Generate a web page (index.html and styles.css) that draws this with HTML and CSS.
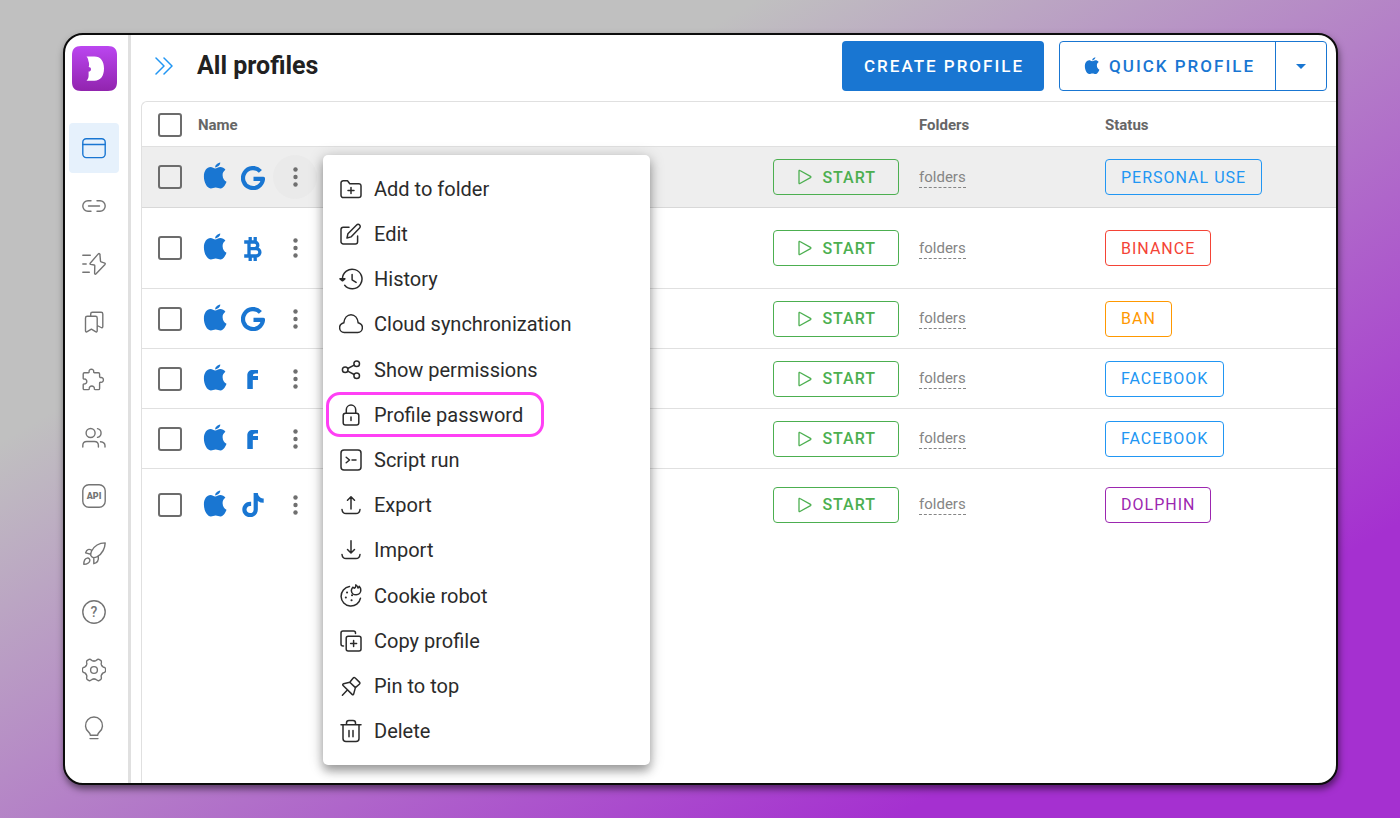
FILE: index.html
```html
<!DOCTYPE html>
<html lang="en">
<head>
  <meta charset="UTF-8" />
  <title>All profiles</title>
  <meta name="viewport" content="width=device-width, initial-scale=1.0" />
  <link rel="stylesheet" href="styles.css">
</head>
<body>

  <!-- Icons -->
  <svg class="sprite" aria-hidden="true">
    <symbol id="i-apple" viewBox="0 0 24 28"><path fill="currentColor" d="M12.3 6.6c1.4-.2 2.8-1.5 5-1.5 2 0 3.9 1 5.1 2.7-2 1.4-2.9 3.2-2.8 5.5.1 3.2 1.6 5.3 3.9 6.4-1.1 3-3.2 6.6-5.8 6.7-1.8.1-3-.9-5-.9s-3.4 1-5 .9C4 26.2.9 20.5.9 14.5.9 8.8 4 5.200 7.500 5.100c1.900 0 3.300 1.200 4.800 1.500z"/><path fill="currentColor" d="M12.200 5.400c-.2-2 2-4.400 5.100-4.900.1 2.300-2.300 4.700-5.100 4.900z"/></symbol>
    <symbol id="i-google" viewBox="0 0 24 24"><path stroke="currentColor" stroke-width="4.200" fill="none" d="M19.400 5.300A10 10 0 1 0 22 12.800H12.500"/></symbol>
    <symbol id="i-bitcoin" viewBox="0 0 24 24"><path stroke="currentColor" stroke-width="3.300" fill="none" d="M3.200 5h10.300a3.300 3.300 0 0 1 0 6.600H8m5.500 0h1.700a3.600 3.600 0 0 1 0 7.400H3.200M8 5v14M9.200 0v4m5-4v4m-5 16v4m5-4v4"/></symbol>
    <symbol id="i-facebook" viewBox="0 0 24 24"><path fill="currentColor" d="M6.300 22V8.500C6.300 5 8.300 3 11.800 3H17v3.600h-2.600c-1.600 0-2.400.7-2.400 2.400h5v3.900h-5.200V22z"/></symbol>
    <symbol id="i-tiktok" viewBox="3.200 3.200 17.600 17.600"><path fill="currentColor" d="M16.600 5.820A4.278 4.278 0 0 1 15.540 3h-3.090v12.400a2.592 2.592 0 0 1-2.590 2.500c-1.420 0-2.600-1.160-2.600-2.600 0-1.720 1.660-3.010 3.370-2.480V9.660c-3.450-.46-6.470 2.220-6.470 5.640 0 3.330 2.760 5.700 5.690 5.700 3.140 0 5.690-2.550 5.690-5.700V9.010a7.350 7.350 0 0 0 4.300 1.380V7.300s-1.880.09-3.240-1.480z"/></symbol>
    <symbol id="i-dots" viewBox="0 0 24 24"><g fill="currentColor"><circle cx="12.500" cy="4.500" r="2.200"/><circle cx="12.500" cy="12" r="2.200"/><circle cx="12.500" cy="19.500" r="2.200"/></g></symbol>
    <symbol id="i-play" viewBox="0 0 14 16"><path d="M1 2v12c0 .6.4.8.9.5l10.600-5.900c.5-.3.5-.9 0-1.200L1.900 1.500C1.400 1.200 1 1.400 1 2z"/></symbol>

    <symbol id="i-window" viewBox="0 0 24 24"><rect x=".8" y="2.800" width="22.400" height="18.800" rx="3.500"/><path d="M.8 8.500h22.400"/></symbol>
    <symbol id="i-link" viewBox="0 0 24 24"><path d="M9 6.800H6a5.200 5.200 0 0 0 0 10.400h3M15 6.800h3a5.200 5.200 0 0 1 0 10.400h-3M6.500 12h11"/></symbol>
    <symbol id="i-bolt" viewBox="0 0 24 24"><path d="M.8 3.200h7.500M.8 12h3.400M.8 20.300h6.500M16.300 1.900L8.200 11.200c-.4.5-.2 1 .4 1.200l3.600.6c.4.100.6.3.6.7l-.2 7.500c0 1 .8 1.300 1.500.6l8.900-9.400c.4-.5.3-.9-.2-1.200l-3.700-1.300c-.4-.1-.6-.4-.6-.8l-.6-6.700c0-.9-1-1.100-1.600-.5z"/></symbol>
    <symbol id="i-bookmarks" viewBox="0 0 24 24"><path d="M5.200 6.300h8.300c1 0 1.700.7 1.700 1.700v12.800c0 1.100-.8 1.500-1.700.9l-4.100-2.500-4.200 2.500c-.9.6-1.700.2-1.700-.9V8c0-1 .7-1.700 1.700-1.700zM8.700 6.300V4c0-1 .7-1.700 1.700-1.700h8.700c1 0 1.700.7 1.700 1.700v12.500c0 1-.8 1.500-1.700 1l-3.900-2"/></symbol>
    <symbol id="i-puzzle" viewBox="0 0 24 24"><path d="M2.500 4.800h3.700c.8 0 1-.6.9-1.200C6.900 2.200 8 1.200 9.400 1.200s2.500 1 2.300 2.400c-.1.6.1 1.200.9 1.200h3.800c.8 0 1.200.5 1.200 1.200v2.600c0 .8.6 1 1.200.9 1.400-.2 2.600.9 2.600 2.400s-1.200 2.600-2.600 2.400c-.6-.1-1.200.1-1.200.9v5.200c0 .8-.4 1.200-1.200 1.200h-3.200c-.8 0-1-.6-.9-1.200.2-1.400-1-2.400-2.500-2.400s-2.700 1-2.500 2.400c.1.6-.1 1.200-.9 1.200h-4c-.8 0-1.200-.4-1.200-1.200v-3.600c0-.8.6-1 1.200-.9 1.400.2 2.400-.9 2.400-2.400s-1-2.600-2.400-2.400c-.6.1-1.200-.1-1.200-.9V6c0-.8.5-1.200 1.300-1.200z"/></symbol>
    <symbol id="i-users" viewBox="0 0 24 24"><circle cx="8.600" cy="7" r="4.500"/><path d="M.8 21v-1.500c0-2.600 1.600-4 4-4h7.600c2.400 0 4 1.400 4 4V21M15.500 2.600a4.500 4.500 0 0 1 0 8.800M18.500 15.700c2.900.3 4.500 1.600 4.500 4V21"/></symbol>
    <symbol id="i-rocket" viewBox="0 0 24 24"><path d="M23.200.9C17 1 12.500 3.500 9.600 9c-.6 1.300-1 2.700-.9 4.300.5 1.300 1.300 2 2.800 2.400 1.500 0 2.600-.4 3.800-1C20.500 11.500 22.900 7 23.200.9zM9.900 8.500C7 6.500 4.600 7.300 3.600 10.900l5.100 1.300M11.800 15.700v6c3.400-1 5.200-3 4.500-7.400M1.800 22.300c0-3.200.8-5.700 3.400-6.200 1.700-.3 3 1 2.600 2.700-.5 2.200-3 3.300-6 3.500z"/></symbol>
    <symbol id="i-gear" viewBox="0 0 24 24">
      <path id="tooth" d="M19.800 7.500l.2.400q.6 1 1.700 1.300 1.900.6 1.900 1.800v2q0 1.200-1.900 1.800-1.100.3-1.700 1.300l-.2.400"/>
      <use href="#tooth" transform="rotate(60 12 12)"/>
      <use href="#tooth" transform="rotate(120 12 12)"/>
      <use href="#tooth" transform="rotate(180 12 12)"/>
      <use href="#tooth" transform="rotate(240 12 12)"/>
      <use href="#tooth" transform="rotate(300 12 12)"/>
      <circle cx="12" cy="12" r="3.400"/>
    </symbol>
    <symbol id="i-bulb" viewBox="0 0 24 24"><path d="M8.300 19.300h7.400c0-1.600.4-2.200 1.600-3.200a8.500 8.500 0 1 0-10.600 0c1.200 1 1.600 1.600 1.600 3.200zM8 22.600h8"/></symbol>

    <symbol id="i-folder" viewBox="0 0 24 24"><path d="M2 6a2.300 2.300 0 0 1 2.300-2.300h4.200l2.300 3h9A2.200 2.200 0 0 1 22 8.900v9.400a2.300 2.300 0 0 1-2.300 2.300H4.300A2.300 2.300 0 0 1 2 18.300zM12 10.500v6M9 13.500h6"/></symbol>
    <symbol id="i-edit" viewBox="0 0 24 24"><path d="M10 5.300H4.300A2.300 2.300 0 0 0 2 7.600v12.100A2.300 2.300 0 0 0 4.300 22h12a2.300 2.300 0 0 0 2.300-2.300V14M8 16l.9-4.200L17.600 3a2.100 2.100 0 0 1 3 0 2.100 2.100 0 0 1 0 3L12 14.900z"/></symbol>
    <symbol id="i-history" viewBox="0 0 24 24"><path d="M3.400 12a9.800 9.800 0 1 1 2.300 6.300M13.100 7.500v5.300l4 2.600M1 11.800h4.900l-2.400 2z"/></symbol>
    <symbol id="i-cloud" viewBox="0 0 24 24"><path d="M5.200 20.500h13.600a4.700 4.700 0 0 0 4.600-4.700c0-2.600-1.800-4.300-4.200-5-.6-4.500-3.400-8-7.200-8s-6.600 3.500-7.200 8c-2.400.7-4.200 2.400-4.200 5a4.700 4.700 0 0 0 4.600 4.700z"/></symbol>
    <symbol id="i-share" viewBox="0 0 24 24"><circle cx="6.200" cy="11.800" r="2.800"/><circle cx="17.700" cy="5.800" r="2.800"/><circle cx="17.700" cy="17.800" r="2.800"/><path d="M8.700 10.500l6.500-3.400M8.700 13.100l6.500 3.400"/></symbol>
    <symbol id="i-lock" viewBox="0 0 24 24"><rect x="4.200" y="10.300" width="15.600" height="11.700" rx="2.300"/><path d="M7.300 10.300V6.800a4.700 4.700 0 0 1 9.400 0v3.500M12 14v3.500"/></symbol>
    <symbol id="i-script" viewBox="0 0 24 24"><rect x="2" y="2" width="20" height="20" rx="3"/><path d="M7.200 9.200l3.300 2.800-3.300 2.800M13 12h4"/></symbol>
    <symbol id="i-export" viewBox="0 0 24 24"><path d="M12 16V4M8.500 7.200L12 3.700l3.500 3.500M3 16.500c.3 2.700 1.500 4 4 4h10c2.500 0 3.700-1.300 4-4"/></symbol>
    <symbol id="i-import" viewBox="0 0 24 24"><path d="M12 2.700v12M8.500 11.500L12 15l3.500-3.500M3 16.500c.3 2.700 1.500 4 4 4h10c2.500 0 3.700-1.300 4-4"/></symbol>
    <symbol id="i-cookie" viewBox="0 0 24 24"><path d="M10.500 2.600a9.800 9.800 0 1 0 11 11.600"/><path stroke-width="2" d="M8 8.500h.1M13 11.300h.1M6.800 13.500h.1M12.500 16.300h.1"/><path d="M16.800.8c.2 2-.3 2.900-1.700 3.500-.2-.8-.6-1-1.300-1-1 1.200-1.600 2.100-1.400 3.700.4 2.500 2.300 3.800 4.700 3.800 2.700 0 4.700-1.900 4.700-4.500 0-1.800-.6-3-1.600-4-.2.900-.6 1.400-1.300 1.700 0-1.500-.8-2.500-2.100-3.200z"/></symbol>
    <symbol id="i-copy" viewBox="0 0 24 24"><rect x="7.200" y="7.200" width="14.800" height="14.800" rx="2"/><path d="M16.500 4.500V4a2 2 0 0 0-2-2H4a2 2 0 0 0-2 2v11a2 2 0 0 0 2 2h.5M14.600 11.600v6M11.600 14.600h6"/></symbol>
    <symbol id="i-pin" viewBox="0 0 24 24"><path d="M10.800 8.300l3.200-4.100c.7-.8 1.500-.8 2.200-.2l4.200 4.100c.7.700.7 1.500-.1 2.200l-3.900 3.300-1.700 6.300c-.2.900-1 1.100-1.600.5l-9-8.900c-.7-.7-.4-1.500.5-1.700zM10.800 8.300l5.600 5.300M8.600 15.800l-5.200 5.400"/></symbol>
    <symbol id="i-trash" viewBox="0 0 24 24"><path d="M2 5.800h20M7.500 5.500V4a2.500 2.500 0 0 1 2.500-2.500h4A2.500 2.500 0 0 1 16.500 4v1.500M4 6v13.500A3 3 0 0 0 7 22.500h10a3 3 0 0 0 3-3V6M10 11.500v6.300M14 11.500v6.300"/></symbol>
  </svg>

  <div class="window">

    <nav class="sidebar" aria-label="Main">
      <a class="logo" href="#" aria-label="Home">
        <svg viewBox="0 0 45 45">
          <defs>
            <linearGradient id="logoFill" x1="0" y1="0" x2="0" y2="1">
              <stop offset="0" stop-color="#bb46f0"/>
              <stop offset="1" stop-color="#9124ae"/>
            </linearGradient>
          </defs>
          <path fill="url(#logoFill)" d="M0 9C0 3 3 0 9 0h27c6 0 9 3 9 9v27c0 6-3 9-9 9H9c-6 0-9-3-9-9z"/>
          <path fill="#fff" d="M14.500 10.500h8c6 0 9.500 4.500 9.500 12s-3.500 12.200-9.500 12.200h-8c1.300-1.200 2.100-2.800 2.100-5.200v-4c1 .2 2.400-.9 2.400-2.300 0-1.500-1.100-2.300-2.300-2.300.6-2 .5-4-.3-6-.2-1.700-.7-3-1.900-4.400z"/>
        </svg>
      </a>
      <a class="nav-item active" href="#" aria-label="Profiles"><svg><use href="#i-window"/></svg></a>
      <a class="nav-item" href="#" aria-label="Proxies"><svg><use href="#i-link"/></svg></a>
      <a class="nav-item" href="#" aria-label="Automation"><svg><use href="#i-bolt"/></svg></a>
      <a class="nav-item" href="#" aria-label="Bookmarks"><svg><use href="#i-bookmarks"/></svg></a>
      <a class="nav-item" href="#" aria-label="Extensions"><svg><use href="#i-puzzle"/></svg></a>
      <a class="nav-item" href="#" aria-label="Team"><svg><use href="#i-users"/></svg></a>
      <a class="nav-item" href="#" aria-label="API">
        <svg viewBox="0 0 24 24"><rect x=".8" y=".8" width="22.400" height="22.400" rx="6"/><text x="12" y="15" class="glyph api">API</text></svg>
      </a>
      <a class="nav-item" href="#" aria-label="Updates"><svg><use href="#i-rocket"/></svg></a>
      <a class="nav-item" href="#" aria-label="Help">
        <svg viewBox="0 0 24 24"><circle cx="12" cy="12" r="11.200"/><text x="12" y="17" class="glyph mark">?</text></svg>
      </a>
      <a class="nav-item" href="#" aria-label="Settings"><svg><use href="#i-gear"/></svg></a>
      <a class="nav-item" href="#" aria-label="Ideas"><svg><use href="#i-bulb"/></svg></a>
    </nav>

    <main class="main">
      <header class="topbar">
        <button class="expand" aria-label="Expand menu">
          <svg viewBox="0 0 18 18"><path d="M1 1l8 8-8 8M9 1l8 8-8 8"/></svg>
        </button>
        <h1>All profiles</h1>
        <button class="btn btn-primary">Create profile</button>
        <div class="btn-group">
          <button class="btn"><svg class="apple"><use href="#i-apple"/></svg>Quick profile</button>
          <button class="btn btn-caret" aria-label="More options"><span class="caret"></span></button>
        </div>
      </header>

      <div class="table-wrap">
        <table>
          <thead>
            <tr>
              <th class="col-check"><input type="checkbox" aria-label="Select all"></th>
              <th>Name</th>
              <th class="col-start"></th>
              <th class="col-folders">Folders</th>
              <th class="col-status">Status</th>
            </tr>
          </thead>
          <tbody>
            <tr class="selected">
              <td class="col-check"><input type="checkbox" aria-label="Select profile 1"></td>
              <td>
                <div class="name">
                  <svg class="apple"><use href="#i-apple"/></svg>
                  <svg class="brand"><use href="#i-google"/></svg>
                  <div class="actions">
                    <button class="more" aria-label="Profile menu" aria-expanded="true"><svg><use href="#i-dots"/></svg></button>
                    <div class="menu" role="menu">
                      <button class="menu-item" role="menuitem"><svg><use href="#i-folder"/></svg>Add to folder</button>
                      <button class="menu-item" role="menuitem"><svg><use href="#i-edit"/></svg>Edit</button>
                      <button class="menu-item" role="menuitem"><svg><use href="#i-history"/></svg>History</button>
                      <button class="menu-item" role="menuitem"><svg><use href="#i-cloud"/></svg>Cloud synchronization</button>
                      <button class="menu-item" role="menuitem"><svg><use href="#i-share"/></svg>Show permissions</button>
                      <button class="menu-item highlight" role="menuitem"><svg><use href="#i-lock"/></svg>Profile password</button>
                      <button class="menu-item" role="menuitem"><svg><use href="#i-script"/></svg>Script run</button>
                      <button class="menu-item" role="menuitem"><svg><use href="#i-export"/></svg>Export</button>
                      <button class="menu-item" role="menuitem"><svg><use href="#i-import"/></svg>Import</button>
                      <button class="menu-item" role="menuitem"><svg><use href="#i-cookie"/></svg>Cookie robot</button>
                      <button class="menu-item" role="menuitem"><svg><use href="#i-copy"/></svg>Copy profile</button>
                      <button class="menu-item" role="menuitem"><svg><use href="#i-pin"/></svg>Pin to top</button>
                      <button class="menu-item" role="menuitem"><svg><use href="#i-trash"/></svg>Delete</button>
                    </div>
                  </div>
                </div>
              </td>
              <td><button class="start"><svg><use href="#i-play"/></svg>Start</button></td>
              <td><a class="folders" href="#">folders</a></td>
              <td><button class="status blue">Personal use</button></td>
            </tr>
            <tr class="tall">
              <td class="col-check"><input type="checkbox" aria-label="Select profile 2"></td>
              <td>
                <div class="name">
                  <svg class="apple"><use href="#i-apple"/></svg>
                  <svg class="brand"><use href="#i-bitcoin"/></svg>
                  <button class="more" aria-label="Profile menu"><svg><use href="#i-dots"/></svg></button>
                </div>
              </td>
              <td><button class="start"><svg><use href="#i-play"/></svg>Start</button></td>
              <td><a class="folders" href="#">folders</a></td>
              <td><button class="status red">Binance</button></td>
            </tr>
            <tr>
              <td class="col-check"><input type="checkbox" aria-label="Select profile 3"></td>
              <td>
                <div class="name">
                  <svg class="apple"><use href="#i-apple"/></svg>
                  <svg class="brand"><use href="#i-google"/></svg>
                  <button class="more" aria-label="Profile menu"><svg><use href="#i-dots"/></svg></button>
                </div>
              </td>
              <td><button class="start"><svg><use href="#i-play"/></svg>Start</button></td>
              <td><a class="folders" href="#">folders</a></td>
              <td><button class="status orange">Ban</button></td>
            </tr>
            <tr>
              <td class="col-check"><input type="checkbox" aria-label="Select profile 4"></td>
              <td>
                <div class="name">
                  <svg class="apple"><use href="#i-apple"/></svg>
                  <svg class="brand"><use href="#i-facebook"/></svg>
                  <button class="more" aria-label="Profile menu"><svg><use href="#i-dots"/></svg></button>
                </div>
              </td>
              <td><button class="start"><svg><use href="#i-play"/></svg>Start</button></td>
              <td><a class="folders" href="#">folders</a></td>
              <td><button class="status blue">Facebook</button></td>
            </tr>
            <tr>
              <td class="col-check"><input type="checkbox" aria-label="Select profile 5"></td>
              <td>
                <div class="name">
                  <svg class="apple"><use href="#i-apple"/></svg>
                  <svg class="brand"><use href="#i-facebook"/></svg>
                  <button class="more" aria-label="Profile menu"><svg><use href="#i-dots"/></svg></button>
                </div>
              </td>
              <td><button class="start"><svg><use href="#i-play"/></svg>Start</button></td>
              <td><a class="folders" href="#">folders</a></td>
              <td><button class="status blue">Facebook</button></td>
            </tr>
            <tr class="last">
              <td class="col-check"><input type="checkbox" aria-label="Select profile 6"></td>
              <td>
                <div class="name">
                  <svg class="apple"><use href="#i-apple"/></svg>
                  <svg class="brand"><use href="#i-tiktok"/></svg>
                  <button class="more" aria-label="Profile menu"><svg><use href="#i-dots"/></svg></button>
                </div>
              </td>
              <td><button class="start"><svg><use href="#i-play"/></svg>Start</button></td>
              <td><a class="folders" href="#">folders</a></td>
              <td><button class="status purple">Dolphin</button></td>
            </tr>
          </tbody>
        </table>
      </div>
    </main>
  </div>

</body>
</html>
```
FILE: styles.css
```css
:root {
  --blue: #1976d2;
  --light-blue: #2196f3;
  --green: #4caf50;
  --line: #e0e0e0;
  --text: #212121;
}

* {
  box-sizing: border-box;
}

body {
  margin: 0;
  min-height: 100vh;
  padding: 33px 62px 33px 63px;
  font-family: Roboto, sans-serif;
  color: var(--text);
  background: linear-gradient(to bottom right, #c0c0c0 27%, #a530d0 82%);
}

button {
  font-family: inherit;
  background: none;
  border: none;
  padding: 0;
  cursor: pointer;
}

svg {
  display: block;
  flex: none;
  fill: none;
  stroke-linecap: round;
  stroke-linejoin: round;
}

.sprite {
  position: absolute;
  width: 0;
  height: 0;
}

.window {
  display: flex;
  min-height: calc(100vh - 66px);
  background: #fff;
  border: 2px solid #0c0c0c;
  border-radius: 20px;
  box-shadow: 1px 4px 7px rgba(0, 0, 0, 0.5);
  overflow: hidden;
}

/* Sidebar */
.sidebar {
  display: flex;
  flex-direction: column;
  align-items: center;
  gap: 8px;
  padding: 11px 9px 20px 4px;
  border-right: 3px solid var(--line);
}

.logo {
  margin-bottom: 24px;
}

.logo svg {
  width: 45px;
  height: 45px;
}

.nav-item {
  display: grid;
  place-items: center;
  width: 50px;
  height: 50px;
  border-radius: 4px;
  color: #747474;
}

.nav-item svg {
  width: 24px;
  height: 24px;
  stroke: currentColor;
  stroke-width: 1.4;
  overflow: visible;
}

.nav-item.active {
  color: var(--blue);
  background: #e6f1fc;
}

.glyph {
  fill: currentColor;
  stroke: none;
  text-anchor: middle;
  font-family: Roboto, sans-serif;
}

.api {
  font-size: 9px;
  font-weight: 900;
}

.mark {
  font-size: 14px;
  font-weight: 500;
}

/* Top bar */
.main {
  flex: 1;
  min-width: 0;
  display: flex;
  flex-direction: column;
  padding-left: 10px;
}

.topbar {
  display: flex;
  align-items: center;
  padding: 6px 9px 10px 14px;
}

.expand svg {
  width: 18px;
  height: 18px;
  stroke: var(--light-blue);
  stroke-width: 1.5;
}

h1 {
  flex: 1;
  margin: 0 0 0 24px;
  font-size: 25px;
  font-weight: 700;
  line-height: 30px;
}

.btn {
  display: flex;
  align-items: center;
  height: 50px;
  padding: 0 20px 0 22px;
  border-radius: 4px;
  color: var(--blue);
  font-size: 17px;
  font-weight: 500;
  letter-spacing: 2px;
  text-transform: uppercase;
}

.btn-primary {
  color: #fff;
  background: var(--blue);
}

.btn-group {
  display: flex;
  margin-left: 15px;
  border: 1px solid var(--blue);
  border-radius: 4px;
}

.btn-group .btn {
  height: 48px;
  padding-left: 24px;
}

.btn .apple {
  width: 16px;
  height: 18px;
  margin-right: 9px;
}

.btn-group .btn-caret {
  width: 51px;
  padding: 0;
  justify-content: center;
  border-left: 1px solid var(--blue);
  border-radius: 0;
}

.caret {
  border: 5px solid transparent;
  border-top-color: var(--blue);
  border-bottom: none;
}

/* Profiles table */
.table-wrap {
  flex: 1;
  border-top: 1px solid var(--line);
  border-left: 1px solid var(--line);
  border-top-left-radius: 6px;
}

table {
  width: 100%;
  table-layout: fixed;
  border-collapse: separate;
  border-spacing: 0;
}

th,
td {
  padding: 0;
  text-align: left;
  vertical-align: middle;
  border-bottom: 1px solid var(--line);
}

th {
  height: 45px;
  padding-top: 2px;
  color: #666;
  font-size: 15px;
  font-weight: 700;
}

td {
  height: 60px;
}

.selected td {
  height: 61px;
  background: #eee;
  border-bottom-color: #d8d8d8;
}

.tall td {
  height: 81px;
}

.last td {
  height: 71px;
  border-bottom: none;
}

.col-check {
  width: 56px;
  padding-left: 16px;
}

.col-start {
  width: 146px;
}

.col-folders {
  width: 186px;
}

.col-status {
  width: 231px;
}

input[type="checkbox"] {
  appearance: none;
  display: block;
  width: 24px;
  height: 24px;
  margin: 0;
  border: 2px solid #6c6c6c;
  border-radius: 3px;
  cursor: pointer;
}

.name {
  display: flex;
  align-items: center;
  padding-left: 5px;
  color: var(--blue);
}

.name .apple {
  width: 24px;
  height: 28px;
  margin-bottom: 2px;
}

.brand {
  width: 24px;
  height: 24px;
  margin: 1px 8px 0 14px;
  overflow: visible;
  stroke-linecap: butt;
}

.more {
  display: grid;
  place-items: center;
  width: 44px;
  height: 44px;
  border-radius: 50%;
  color: #6f6f6f;
}

.more svg {
  width: 24px;
  height: 24px;
}

.more[aria-expanded="true"] {
  background: #eaeaea;
}

.start {
  display: flex;
  align-items: center;
  justify-content: flex-end;
  gap: 10px;
  width: 126px;
  height: 36px;
  padding-right: 22px;
  border: 1px solid var(--green);
  border-radius: 4px;
  color: var(--green);
  font-size: 16px;
  font-weight: 500;
  letter-spacing: 1px;
  text-transform: uppercase;
}

.start svg {
  width: 14px;
  height: 16px;
  stroke: currentColor;
  stroke-width: 1.3;
}

.folders {
  display: inline-block;
  color: #858585;
  font-size: 15px;
  line-height: 19px;
  text-decoration: none;
  border-bottom: 1px dashed #858585;
}

.status {
  display: block;
  height: 36px;
  padding: 0 15px;
  border: 1px solid currentColor;
  border-radius: 4px;
  font-size: 16px;
  letter-spacing: 1px;
  text-transform: uppercase;
}

.blue {
  color: var(--light-blue);
}

.red {
  color: #f44336;
}

.orange {
  color: #ff9800;
}

.purple {
  color: #9c27b0;
}

/* Profile menu */
.actions {
  position: relative;
}

.menu {
  position: absolute;
  top: 0;
  left: 50px;
  z-index: 10;
  display: grid;
  grid-auto-rows: 1fr;
  width: 327px;
  min-height: 610px;
  padding: 11px 0;
  background: #fff;
  border-radius: 5px;
  box-shadow: 0 6px 10px rgba(0, 0, 0, 0.3), 0 2px 16px rgba(0, 0, 0, 0.2);
}

.menu-item {
  display: flex;
  align-items: center;
  gap: 11px;
  padding: 0 16px;
  color: #2b2b2b;
  font-size: 20px;
}

.menu-item svg {
  width: 24px;
  height: 24px;
  stroke: currentColor;
  stroke-width: 1.5;
}

.menu-item.highlight {
  width: fit-content;
  margin-left: 3px;
  padding: 0 18px 0 10px;
  border: 3px solid #ff40f5;
  border-radius: 14px;
}
```
